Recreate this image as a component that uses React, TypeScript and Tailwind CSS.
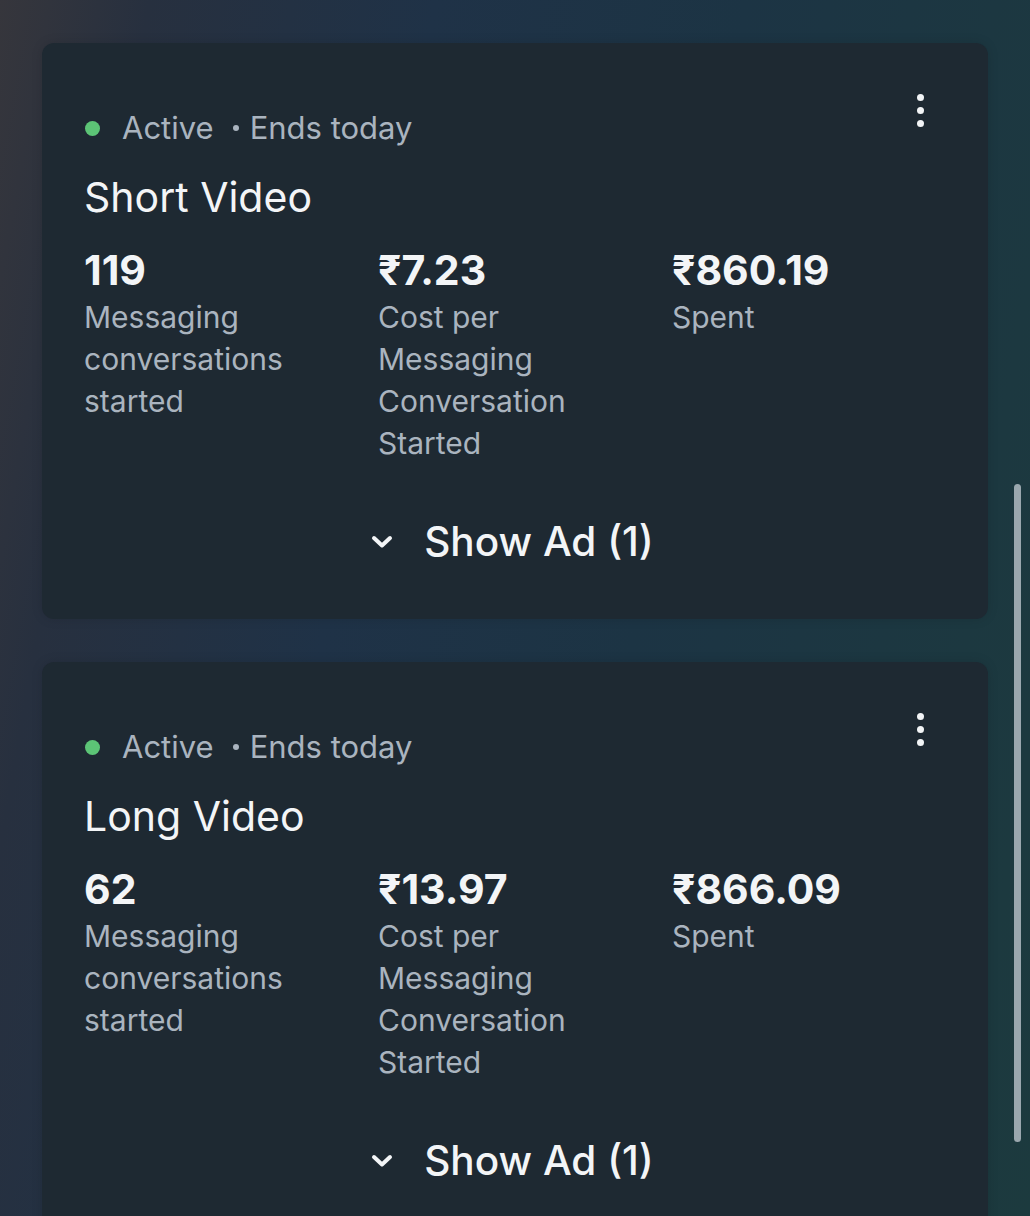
import React from "react";

type Metric = { value: string; label: string[] };

const cards: { title: string; metrics: Metric[] }[] = [
  {
    title: "Short Video",
    metrics: [
      { value: "119", label: ["Messaging", "conversations", "started"] },
      { value: "₹7.23", label: ["Cost per", "Messaging", "Conversation", "Started"] },
      { value: "₹860.19", label: ["Spent"] },
    ],
  },
  {
    title: "Long Video",
    metrics: [
      { value: "62", label: ["Messaging", "conversations", "started"] },
      { value: "₹13.97", label: ["Cost per", "Messaging", "Conversation", "Started"] },
      { value: "₹866.09", label: ["Spent"] },
    ],
  },
];

function Kebab() {
  return (
    <div className="absolute right-[64px] top-[51px] flex flex-col items-center gap-[6px]">
      <span className="block h-[7px] w-[7px] rounded-full bg-[#f2f4f6]" />
      <span className="block h-[7px] w-[7px] rounded-full bg-[#f2f4f6]" />
      <span className="block h-[7px] w-[7px] rounded-full bg-[#f2f4f6]" />
    </div>
  );
}

function Card({ title, metrics }: { title: string; metrics: Metric[] }) {
  return (
    <div className="relative rounded-[12px] bg-[#1e2932] pl-[43px] pr-[43px] pt-[65px] pb-[51px] shadow-[0_0_12px_rgba(0,0,0,0.12)]">
      <Kebab />
      <div className="flex h-[40px] items-center text-[31px] text-[#aab4bf]">
        <span className="mr-[22px] block h-[15px] w-[15px] rounded-full bg-[#5cc476]" />
        <span>Active</span>
        <span className="ml-[19px] mr-[11px] block h-[6px] w-[6px] rounded-full bg-[#aab4bf]" />
        <span>Ends today</span>
      </div>
      <div className="mt-[25px] h-[48px] text-[41px] leading-[48px] text-[#f3f5f7] ml-[-1px]">{title}</div>
      <div className="mt-[25px] grid grid-cols-[294px_294px_1fr] ml-[-1px]">
        {metrics.map((m, i) => (
          <div key={i} className="flex flex-col">
            <div className="h-[48px] text-[41px] font-bold leading-[48px] text-[#f3f5f7]">{m.value}</div>
            <div className="mt-[2px] text-[30px] leading-[42px] text-[#aab4bf]">
              {m.label.map((l, j) => (
                <div key={j}>{l}</div>
              ))}
            </div>
          </div>
        ))}
      </div>
      <div className="mt-[52px] flex h-[52px] items-center justify-center">
        <svg width="24" height="16" viewBox="0 0 24 16" className="mr-[30px] ml-[-6px]">
          <path d="M4 4 L12 11.5 L20 4" fill="none" stroke="#f3f5f7" strokeWidth="4" strokeLinecap="round" strokeLinejoin="round" />
        </svg>
        <span className="text-[40.5px] font-medium leading-[52px] text-[#f3f5f7]">Show Ad (1)</span>
      </div>
    </div>
  );
}

export default function App() {
  return (
    <div
      className="relative h-[1216px] w-[1030px] overflow-hidden bg-[#1f3040]"
      style={{ fontFamily: "Inter, 'Noto Sans', 'DejaVu Sans', sans-serif" }}
    >
      <div className="absolute inset-0 bg-[linear-gradient(100deg,#36363c_0%,#27303f_12%,#1f3247_35%,#1c3444_60%,#1c3a3e_100%)]" />
      <div className="relative flex flex-col gap-[43px] px-[42px] pt-[43px]">
        {cards.map((c, i) => (
          <Card key={i} title={c.title} metrics={c.metrics} />
        ))}
      </div>
      <div className="absolute left-[1014px] top-[484px] h-[658px] w-[7px] rounded-full bg-[#9aa7ae]" />
    </div>
  );
}
